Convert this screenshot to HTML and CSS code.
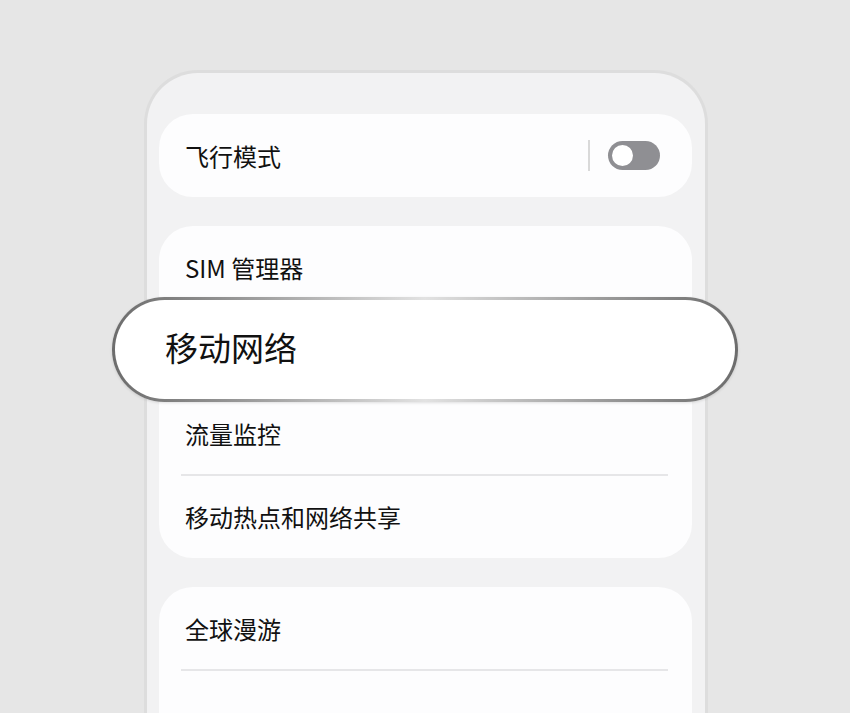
FILE: index.html
```html
<!DOCTYPE html>
<html lang="zh-CN">
<head>
  <meta charset="UTF-8">
  <title>连接</title>
  <link rel="stylesheet" href="styles.css">
</head>
<body>
  <div class="phone">
    <div class="card">
      <div class="row">
        <span class="label">飞行模式</span>
        <div class="switch-wrap">
          <span class="sep"></span>
          <span class="switch"><span class="knob"></span></span>
        </div>
      </div>
    </div>

    <div class="card">
      <div class="row">
        <span class="label">SIM 管理器</span>
      </div>
      <div class="line"></div>
      <div class="row focus-row">
        <span class="label">移动网络</span>
        <div class="focus">
          <span class="focus-label">移动网络</span>
        </div>
      </div>
      <div class="row">
        <span class="label">流量监控</span>
      </div>
      <div class="line"></div>
      <div class="row">
        <span class="label">移动热点和网络共享</span>
      </div>
    </div>

    <div class="card last-card">
      <div class="row">
        <span class="label">全球漫游</span>
      </div>
      <div class="line"></div>
      <div class="row next-row"></div>
    </div>
  </div>
</body>
</html>
```

FILE: styles.css
```css
html, body {
  margin: 0;
  height: 713px;
  overflow: hidden;
}

body {
  background-color: #e6e6e6;
  font-family: "Noto Sans CJK SC", "Noto Sans", sans-serif;
  color: #111;
}

.phone {
  box-sizing: border-box;
  width: 564px;
  height: 643px;
  margin: 70px 0 0 144px;
  padding: 41px 13px 0 12px;
  background-color: #f2f2f3;
  border: 3px solid #dddddd;
  border-bottom: none;
  border-radius: 54px 54px 0 0;
}

.card {
  background-color: #fdfdfe;
  border-radius: 34px;
  margin-bottom: 29px;
}

.last-card {
  margin-bottom: 0;
  border-radius: 34px 34px 0 0;
}

.row {
  position: relative;
  display: flex;
  align-items: center;
  justify-content: space-between;
  height: 83px;
  padding: 0 32px 0 26px;
}

.label {
  font-size: 24px;
  line-height: 1;
}

.line {
  height: 2px;
  margin: -1px 24px -1px 22px;
  background-color: #e6e6e8;
  position: relative;
}

.switch-wrap {
  display: flex;
  align-items: center;
  gap: 18px;
}

.sep {
  width: 2px;
  height: 31px;
  background-color: #d9d9d9;
}

.switch {
  position: relative;
  width: 52px;
  height: 29px;
  border-radius: 15px;
  background-color: #8f8f93;
}

.knob {
  position: absolute;
  left: 2px;
  top: 2px;
  width: 21px;
  height: 21px;
  border-radius: 50%;
  background-color: #fff;
  border: 2px solid #8f8f93;
}

.focus-row .label {
  visibility: hidden;
}

.focus {
  position: absolute;
  left: -47px;
  right: -46px;
  top: -12px;
  height: 105px;
  box-sizing: border-box;
  display: flex;
  align-items: center;
  padding: 0 0 4px 50px;
  border: 3px solid transparent;
  border-radius: 53px;
  background:
    linear-gradient(#fff, #fff) padding-box,
    linear-gradient(90deg, #6c6c6c 0%, #979797 20%, #e2e2e2 50%, #979797 80%, #6c6c6c 100%) border-box;
  box-shadow: 0 1px 3px rgba(0, 0, 0, 0.12);
  z-index: 2;
}

.focus-label {
  font-size: 33px;
  line-height: 1;
}

.next-row {
  height: 60px;
}
```
